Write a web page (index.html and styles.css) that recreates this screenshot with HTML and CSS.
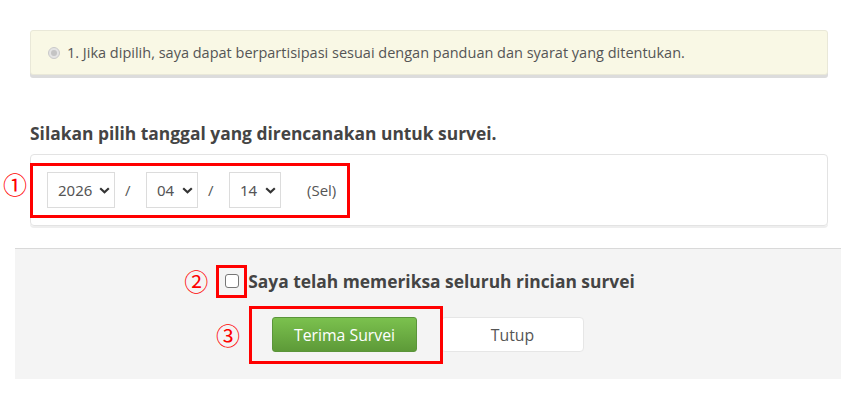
FILE: index.html
```html
<!DOCTYPE html>
<html lang="id">
<head>
<meta charset="utf-8">
<title>Survei</title>
<link rel="stylesheet" href="styles.css">
</head>
<body>
<div class="page">
  <div class="main">
    <div class="notice">
      <svg class="radio" width="12" height="12" viewBox="0 0 12 12"><circle cx="6" cy="6" r="5.5" fill="#e4e4e4" stroke="#c9c9c9"/><circle cx="6" cy="6" r="3" fill="#c4c4c4"/></svg>
      <span>1. Jika dipilih, saya dapat berpartisipasi sesuai dengan panduan dan syarat yang ditentukan.</span>
    </div>

    <h2 class="heading">Silakan pilih tanggal yang direncanakan untuk survei.</h2>

    <div class="datebox">
      <span class="mark mark-1">①</span>
      <span class="redbox redbox-1"></span>
      <div class="sel sel-year"><span>2026</span><svg width="11" height="7" viewBox="0 0 11 7"><path d="M1.2 1.2 L5.5 5.2 L9.8 1.2" fill="none" stroke="#333" stroke-width="2.2"/></svg></div>
      <span class="slash">/</span>
      <div class="sel sel-md"><span>04</span><svg width="11" height="7" viewBox="0 0 11 7"><path d="M1.2 1.2 L5.5 5.2 L9.8 1.2" fill="none" stroke="#333" stroke-width="2.2"/></svg></div>
      <span class="slash">/</span>
      <div class="sel sel-md"><span>14</span><svg width="11" height="7" viewBox="0 0 11 7"><path d="M1.2 1.2 L5.5 5.2 L9.8 1.2" fill="none" stroke="#333" stroke-width="2.2"/></svg></div>
      <span class="day">(Sel)</span>
    </div>
  </div>

  <div class="panel">
    <div class="check-row">
      <span class="check-wrap">
        <span class="mark mark-2">②</span>
        <span class="redbox redbox-2"></span>
        <span class="checkbox"></span>
      </span>
      <span class="check-label">Saya telah memeriksa seluruh rincian survei</span>
    </div>
    <div class="btn-row">
      <span class="btn-wrap">
        <span class="mark mark-3">③</span>
        <span class="redbox redbox-3"></span>
        <button class="btn btn-accept">Terima Survei</button>
      </span>
      <button class="btn btn-close">Tutup</button>
    </div>
  </div>
</div>
</body>
</html>
```

FILE: styles.css
```css
html, body {
  margin: 0;
  padding: 0;
  background: #fff;
}
body {
  font-family: "Open Sans", "Noto Sans", sans-serif;
  color: #555;
}
.page {
  width: 849px;
  height: 403px;
  padding-top: 30px;
  box-sizing: border-box;
}
.main {
  margin: 0 21px 0 30px;
}
.notice {
  height: 45px;
  box-sizing: border-box;
  background: #f9f8e5;
  border: 1px solid #e9e8d8;
  border-radius: 3px;
  box-shadow: 0 3px 0 #dcdcdc;
  display: flex;
  align-items: center;
  padding-left: 17px;
  font-size: 14.5px;
  color: #555;
}
.radio {
  margin-right: 7px;
  flex: none;
}
.heading {
  margin: 46px 0 9px 0;
  font-size: 17.4px;
  font-weight: 700;
  color: #444;
  line-height: 24px;
}
.datebox {
  position: relative;
  height: 72px;
  box-sizing: border-box;
  border: 1px solid #e3e3e3;
  border-radius: 4px;
  box-shadow: 0 2px 0 #eeeeee;
  display: flex;
  align-items: center;
  padding-left: 16px;
  font-size: 15px;
  color: #555;
}
.sel {
  height: 36px;
  box-sizing: border-box;
  border: 1px solid #dcdcdc;
  display: flex;
  align-items: center;
  justify-content: space-between;
  padding: 0 4px 0 10px;
  background: #fff;
  font-family: "Noto Sans", sans-serif;
}
.sel-year { width: 68px; }
.sel-md { width: 52px; }
.slash {
  width: 31px;
  box-sizing: border-box;
  padding-left: 10px;
  font-size: 15px;
}
.day {
  margin-left: 26px;
  font-size: 15px;
}
.mark {
  position: absolute;
  color: #f00;
  font-family: "Noto Sans CJK JP", sans-serif;
  font-size: 24px;
  line-height: 26px;
}
.redbox {
  position: absolute;
  border: 3px solid #f00;
  box-sizing: border-box;
  pointer-events: none;
}
.mark-1 { left: -28px; top: 16px; }
.redbox-1 { left: -1px; top: 8px; width: 320px; height: 55px; }

.panel {
  margin: 22px 8px 0 15px;
  height: 131px;
  box-sizing: border-box;
  background: #f4f4f4;
  border-top: 1px solid #d9d9d9;
  padding-top: 20px;
}
.check-row {
  display: flex;
  justify-content: center;
  align-items: center;
  height: 24px;
  padding-left: 4px;
}
.check-wrap {
  position: relative;
  width: 14px;
  height: 14px;
  margin-right: 9px;
}
.checkbox {
  display: block;
  width: 14px;
  height: 14px;
  box-sizing: border-box;
  border: 1px solid #767676;
  border-radius: 3px;
  background: #fff;
}
.check-label {
  font-size: 17.4px;
  font-weight: 700;
  color: #444;
}
.mark-2 { left: -41px; top: -6px; }
.redbox-2 { left: -9px; top: -9px; width: 31px; height: 33px; }
.btn-row {
  display: flex;
  justify-content: center;
  gap: 24px;
  margin-top: 24px;
}
.btn-wrap {
  position: relative;
  display: block;
}
.btn {
  display: block;
  height: 35px;
  box-sizing: border-box;
  font-family: inherit;
  font-size: 15.8px;
  border-radius: 3px;
  cursor: pointer;
}
.btn-accept {
  width: 145px;
  color: #fff;
  background: linear-gradient(#7bc14e, #5d9a38);
  border: 1px solid #5b953a;
}
.btn-close {
  width: 143px;
  color: #555;
  background: #fff;
  border: 1px solid #e6e6e6;
  border-radius: 4px;
}
.mark-3 { left: -56px; top: 5px; }
.redbox-3 { left: -23px; top: -11px; width: 194px; height: 58px; }
```
